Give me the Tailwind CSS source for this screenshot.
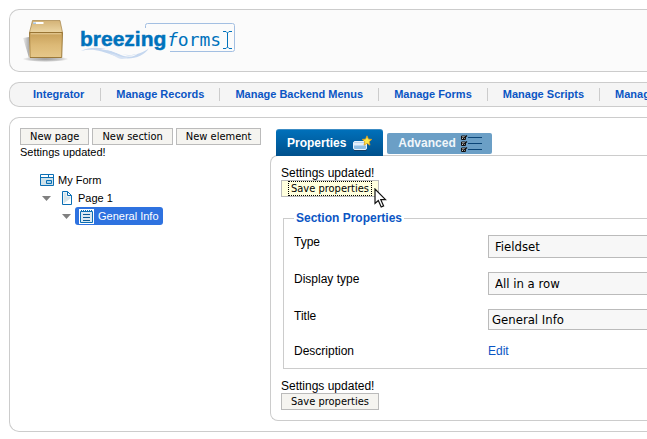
<!DOCTYPE html>
<html lang="en">
<head>
<meta charset="utf-8">
<title>BreezingForms</title>
<script src="https://cdn.jsdelivr.net/npm/@tailwindcss/browser@4"></script>
</head>
<body class="overflow-x-hidden bg-white pt-[9px] pl-[9px] font-['Liberation_Sans',Arial,sans-serif] text-[11px] leading-[15px] text-black">

<header class="flex h-[63px] items-center rounded-l-[10px] border border-r-0 border-[#ccc] bg-[#fbfbfb] pl-3">
  <svg class="h-[48px] w-[48px] shrink-0" viewBox="0 0 48 48" aria-hidden="true">
    <defs>
      <linearGradient id="front" x1="0" y1="0" x2="0" y2="1"><stop offset="0" stop-color="#c79f58"/><stop offset=".5" stop-color="#dcb976"/><stop offset="1" stop-color="#e6c88a"/></linearGradient>
      <linearGradient id="lid" x1="0" y1="0" x2="0" y2="1"><stop offset="0" stop-color="#d3b276"/><stop offset="1" stop-color="#ecd6a4"/></linearGradient>
      <radialGradient id="shade"><stop offset="0" stop-color="#999"/><stop offset=".7" stop-color="#ccc"/><stop offset="1" stop-color="#fbfbfb"/></radialGradient>
      <linearGradient id="side" x1="0" y1="0" x2="1" y2="0"><stop offset="0" stop-color="#eee"/><stop offset="1" stop-color="#aaa"/></linearGradient>
    </defs>
    <ellipse cx="23.500" cy="42" rx="23" ry="3" fill="url(#shade)"/>
    <path d="M1 21l6-1v21z" fill="url(#side)"/>
    <path d="M10.500 3.500h27.500l2.500 12h-33z" fill="url(#lid)" stroke="#a58246" stroke-width=".7"/>
    <path d="M7.500 15.500h33l-.8 25H8z" fill="url(#front)" stroke="#94702f" stroke-width=".9"/>
    <path d="M8.800 16.800h30.400" stroke="#f0dcae" stroke-width=".8"/>
    <path d="M11.500 5h10v2H11z" fill="#fff"/><path d="M11 5.500h3v1.500h-3z" fill="#a9c6e4"/>
  </svg>
  <svg class="ml-2 h-[40px] w-[160px] shrink-0" viewBox="0 0 160 40" role="img" aria-label="breezingforms">
    <path d="M67.500 7V4.500q0-2 2-2h85q2 0 2 2v24q0 2-2 2H92" fill="none" stroke="#a3bfe2"/>
    <path d="M3 30c10-5 22-4 33 1s26 4 35-4c-6 10-21 13-34 8S14 27 3 30z" fill="#c5d7ef"/>
    <path d="M22 29c8-3 16 1 23 4s13 1 16-2c-3 5-11 6-18 3s-13-6-21-5z" fill="#fbfbfb"/>
    <path d="M30 32c8 0 14 7 22 3-5 3-8 4-12 2s-6-4-10-5z" fill="#d7e3f4"/>
    <text x="2" y="25" font-family="'Liberation Sans',Arial,sans-serif" font-weight="700" font-size="21" fill="#0072bc" stroke="#0072bc" stroke-width=".5">breezing</text>
    <text x="89" y="25" font-family="'DejaVu Sans Mono','Courier New',monospace" font-size="18" fill="#0072bc"><tspan font-style="italic">f</tspan>orms</text>
    <path d="M145 10.500h3l1.500 1.500 1.500-1.500h3M149.500 12v14M145 27.500h3l1.500-1.500 1.500 1.500h3" fill="none" stroke="#0072bc"/>
  </svg>
</header>

<nav class="mt-[10px] flex h-[25px] items-center overflow-hidden rounded-l-[10px] border border-r-0 border-[#ccc] bg-[#f5f5f5] pl-2 font-bold whitespace-nowrap text-[#0b55c4]">
  <a href="#" class="pr-4 pl-[15px]">Integrator</a>
  <a href="#" class="border-l border-[#ccc] px-[15px] leading-[13px]">Manage Records</a>
  <a href="#" class="border-l border-[#ccc] px-[15px] leading-[13px]">Manage Backend Menus</a>
  <a href="#" class="border-l border-[#ccc] px-[15px] leading-[13px]">Manage Forms</a>
  <a href="#" class="border-l border-[#ccc] px-[15px] leading-[13px]">Manage Scripts</a>
  <a href="#" class="border-l border-[#ccc] px-[15px] leading-[13px]">Manage Pieces</a>
</nav>

<main class="mt-[10px] flex rounded-l-[10px] border border-r-0 border-[#ccc] py-[10px] pl-[10px]">
  <section class="w-[250px] shrink-0">
    <div class="flex gap-[3px] font-['DejaVu_Sans_Condensed','DejaVu_Sans',sans-serif] whitespace-nowrap">
      <button class="border border-[#bbb] bg-[#f5f4f0] px-[9px]">New page</button>
      <button class="border border-[#bbb] bg-[#f5f4f0] px-[9px]">New section</button>
      <button class="border border-[#bbb] bg-[#f5f4f0] px-[9px]">New element</button>
    </div>
    <p>Settings updated!</p>
    <ul class="mt-[11px] pl-5 leading-[18px]">
      <li>
        <div class="flex items-center gap-1">
          <svg class="h-[12px] w-[14px]" viewBox="0 0 14 12" aria-hidden="true"><path d="M.5.5h13v11H.5z" fill="#cfe2ea" stroke="#0a6eb4"/><path d="M1 1h7v2H1zM9 1h4v2H9z" fill="#fff"/><path d="M0 3.500h14M8.500 0v3" stroke="#0a6eb4"/><path d="M6.500 6.500h5v3h-5z" fill="#a9d4ea" stroke="#0a6eb4"/></svg>
          <span>My Form</span>
        </div>
        <ul>
          <li>
            <div class="flex items-center pl-[2px]">
              <svg class="h-[5px] w-[9px]" viewBox="0 0 9 5" aria-hidden="true"><path d="M0 0h9L4.500 5z" fill="#808080"/></svg>
              <svg class="ml-[11px] h-[14px] w-[10px]" viewBox="0 0 10 14" aria-hidden="true"><path d="M.5.5h5l4 4v9h-9z" fill="#fff" stroke="#0a6eb4"/><path d="M1.500 1.500h3v4h4v2l-7 5z" fill="#d5e4ea"/><path d="M5.500.5v4h4" fill="none" stroke="#0a6eb4"/></svg>
              <span class="ml-[6px]">Page 1</span>
            </div>
            <ul>
              <li class="flex items-center pl-[22px]">
                <svg class="h-[5px] w-[9px]" viewBox="0 0 9 5" aria-hidden="true"><path d="M0 0h9L4.500 5z" fill="#808080"/></svg>
                <a href="#" class="ml-1 flex items-center gap-1 rounded-[3px] bg-[#2e72e0] px-1 text-white">
                  <svg class="h-[15px] w-[15px]" viewBox="0 0 15 15" aria-hidden="true"><path d="M0 0h15v15H0z" fill="#fff"/><path d="M1.500 2.500h12v11h-12z" fill="#d9e8f2" stroke="#0a6eb4"/><path d="M2 1.500h12" stroke="#0a6eb4" stroke-dasharray="1 1"/><path d="M4 5.500h7M4 8.500h7M4 11.500h7" stroke="#0a5a96"/></svg>
                  <span>General Info</span>
                </a>
              </li>
            </ul>
          </li>
        </ul>
      </li>
    </ul>
  </section>

  <section class="min-w-0 grow pt-px text-[12px]">
    <div class="relative -mb-px flex items-start pl-[6px] font-bold text-white">
      <button class="flex h-[27px] items-center gap-[7px] rounded-t-[3px] border-t border-[#3c8cc4] bg-linear-to-b from-[#0070ba] to-[#00508c] pl-[11px] pr-[11px]">
        <span>Properties</span>
        <svg class="h-[16px] w-[19px]" viewBox="0 0 19 16" aria-hidden="true"><rect x=".5" y="6.500" width="13" height="8" rx="1.500" fill="#8fc0e6" stroke="#e8f2fa"/><path d="M1 7.500h12v3H1z" fill="#e3effa"/><path d="M1 15.500h12.500" stroke="#123e66"/><path d="M14 .8l1.400 3.300 3.400.3-2.600 2.300.8 3.500-3-1.900-3 1.900.8-3.500L9.200 4.400l3.400-.3z" fill="#ffea4d" stroke="#dc9a15" stroke-width=".8"/></svg>
      </button>
      <button class="mt-1 ml-1 flex h-[21px] items-center gap-[5px] rounded-[2px] bg-[#6b9fc6] pr-[10px] pl-[11px] text-[#f0f6fa]">
        <span>Advanced</span>
        <svg class="h-[17px] w-[21px]" viewBox="0 0 21 17" aria-hidden="true"><path d="M.5 1h4v3.500h-4zM.5 7h4v3.500h-4zM.5 13h4v3.500h-4z" fill="#fff" stroke="#111"/><path d="M1.500 2l1 1.500L6 .5M1.500 8l1 1.500L6 6.500M1.500 14l1 1.500L6 12.500" fill="none" stroke="#111" stroke-width="1.200"/><path d="M7 2.500h14M7 8.500h14M7 14.500h14" stroke="#0b4577"/></svg>
      </button>
    </div>

    <div class="rounded-l-[8px] border border-r-0 border-[#ccc] pt-[10px] pb-[10px] pl-[10px]">
      <p class="leading-[14px]">Settings updated!</p>
      <div class="relative w-fit">
        <button class="block border border-[#bbb] bg-[#ffffdd] px-[6px] font-['DejaVu_Sans_Condensed','DejaVu_Sans',sans-serif] text-[11px] leading-[15px]"><span class="block px-[3px] outline-1 -outline-offset-1 outline-dotted outline-black">Save properties</span></button>
        <svg class="absolute top-2 left-[93px] h-[21px] w-[13px]" viewBox="0 0 13 21" aria-hidden="true"><path d="M1 1v14.500l3.300-3 2.900 6.500 2.400-1.100-2.800-6.200h4.700z" fill="#fff" stroke="#111" stroke-width="1.200"/></svg>
      </div>

      <fieldset class="mt-[14px] ml-[2px] border border-r-0 border-[#ccc] px-[10px] pb-[10px] leading-[14px]">
        <legend class="px-[2px] font-bold text-[#0b55c4]">Section Properties</legend>
        <div class="-mr-5 grid grid-cols-[194px_1fr] items-start gap-y-[14px] pt-[10px]">
          <label for="type">Type</label>
          <select id="type" class="h-[23px] appearance-none border border-[#bbb] bg-[#f7f7f7] pl-[6px] font-['DejaVu_Sans_Condensed','DejaVu_Sans',sans-serif] text-[13px]"><option>Fieldset</option></select>
          <label for="display">Display type</label>
          <select id="display" class="h-[23px] appearance-none border border-[#bbb] bg-[#f7f7f7] pl-[6px] font-['DejaVu_Sans_Condensed','DejaVu_Sans',sans-serif] text-[13px]"><option>All in a row</option></select>
          <label for="title">Title</label>
          <input id="title" type="text" value="General Info" class="h-[21px] border border-[#bbb] bg-[#f7f7f7] pl-[3px] font-['DejaVu_Sans_Condensed','DejaVu_Sans',sans-serif] text-[13px]">
          <span>Description</span>
          <a href="#" class="text-[#0b55c4]">Edit</a>
        </div>
      </fieldset>

      <p class="mt-[10px] leading-[14px]">Settings updated!</p>
      <button class="block border border-[#bbb] bg-[#f5f4f0] px-[9px] font-['DejaVu_Sans_Condensed','DejaVu_Sans',sans-serif] text-[11px] leading-[15px]">Save properties</button>
    </div>
  </section>
</main>
</body>
</html>
